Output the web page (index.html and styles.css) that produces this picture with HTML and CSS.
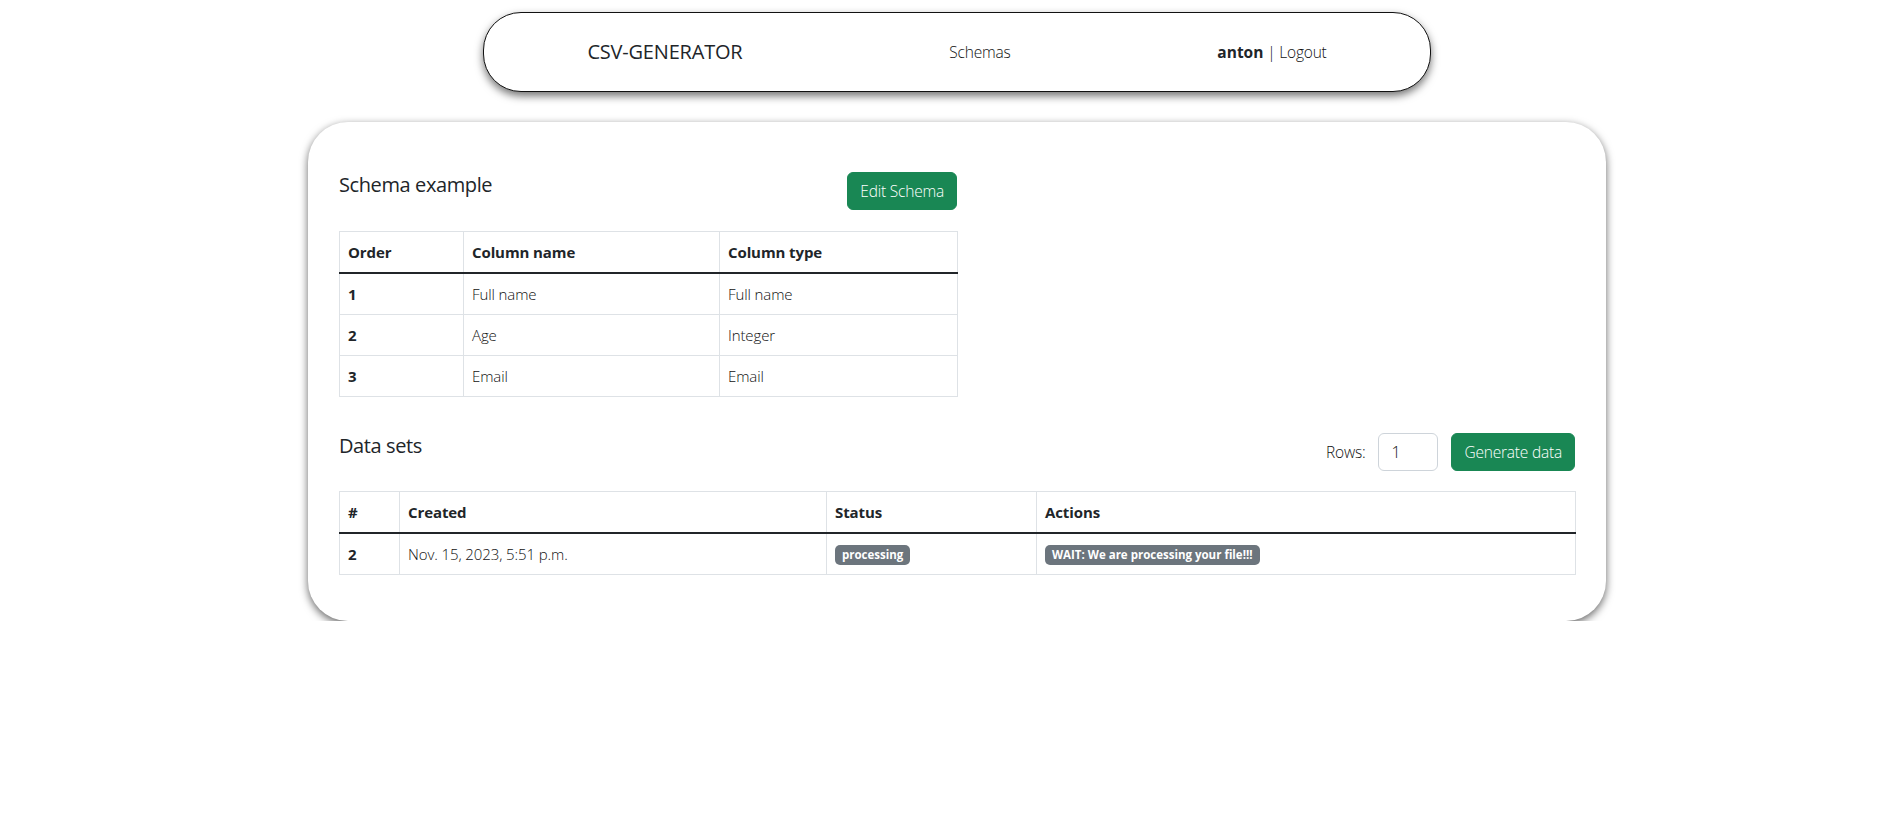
FILE: index.html
```html
<!DOCTYPE html>
<html lang="en">
<head>
<meta charset="utf-8">
<title>CSV-GENERATOR</title>
<link rel="stylesheet" href="styles.css">
</head>
<body>
<div class="page">
  <nav class="navbar">
    <a class="brand" href="#">CSV-GENERATOR</a>
    <a class="nav-link" href="#">Schemas</a>
    <div class="user"><b>anton</b> | <a class="nav-link" href="#">Logout</a></div>
  </nav>

  <main class="card">
    <section class="schema">
      <div class="section-head">
        <h5 class="title">Schema example</h5>
        <a class="btn btn-success" href="#">Edit Schema</a>
      </div>
      <table class="table">
        <colgroup>
          <col class="c-order"><col class="c-name"><col class="c-type">
        </colgroup>
        <thead>
          <tr><th>Order</th><th>Column name</th><th>Column type</th></tr>
        </thead>
        <tbody>
          <tr><th>1</th><td>Full name</td><td>Full name</td></tr>
          <tr><th>2</th><td>Age</td><td>Integer</td></tr>
          <tr><th>3</th><td>Email</td><td>Email</td></tr>
        </tbody>
      </table>
    </section>

    <section class="datasets">
      <div class="section-head">
        <h5 class="title">Data sets</h5>
        <form class="gen-form">
          <label class="rows-label" for="rows">Rows:</label>
          <input class="rows-input" id="rows" type="text" value="1">
          <button class="btn btn-success" type="button">Generate data</button>
        </form>
      </div>
      <table class="table">
        <colgroup>
          <col class="c-num"><col class="c-created"><col class="c-status"><col class="c-actions">
        </colgroup>
        <thead>
          <tr><th>#</th><th>Created</th><th>Status</th><th>Actions</th></tr>
        </thead>
        <tbody>
          <tr>
            <th>2</th>
            <td>Nov. 15, 2023, 5:51 p.m.</td>
            <td><span class="badge">processing</span></td>
            <td><span class="badge">WAIT: We are processing your file!!!</span></td>
          </tr>
        </tbody>
      </table>
    </section>
  </main>
</div>
</body>
</html>
```

FILE: styles.css
```css
* { box-sizing: border-box; }

html, body {
  margin: 0;
  padding: 0;
  background: #fff;
}

body {
  font-family: "Open Sans", "Noto Sans", "Liberation Sans", sans-serif;
  font-size: 16px;
  line-height: 24px;
  color: #212529;
}

a { color: inherit; text-decoration: none; }

.page {
  padding: 12px 0 0 22px;
}

/* ---------- navbar ---------- */
.navbar {
  width: 948px;
  height: 80px;
  margin: 0 auto;
  display: flex;
  align-items: center;
  justify-content: space-around;
  border: 1px solid #111;
  border-radius: 38px;
  background: #fff;
  box-shadow: 0 4px 9px rgba(0, 0, 0, 0.55);
}

.brand {
  font-size: 20px;
  line-height: 30px;
  color: #212529;
  letter-spacing: -0.2px;
}

.nav-link {
  color: #111;
  font-size: 15.5px;
  font-weight: 300;
  letter-spacing: -0.2px;
}

.user {
  font-size: 15.5px;
  font-weight: 300;
  letter-spacing: -0.2px;
  color: #111;
}

.user b { font-weight: 700; letter-spacing: 0; color: #212529; }

/* ---------- card ---------- */
.card {
  width: 1298px;
  margin: 30px auto 0;
  padding: 50px 31px 46px;
  background: #fff;
  border-radius: 40px;
  box-shadow: 0 3px 9px rgba(0, 0, 0, 0.6);
}

.schema {
  width: 618px;
  margin-bottom: 36px;
}

.section-head {
  display: flex;
  justify-content: space-between;
  align-items: flex-start;
  margin-bottom: 21px;
}

.datasets .section-head { margin-bottom: 20px; }

.title {
  margin: 0;
  padding-top: 1px;
  font-size: 20px;
  font-weight: 400;
  line-height: 24px;
  letter-spacing: -0.4px;
}

.btn {
  display: inline-block;
  height: 38px;
  padding: 6px 12px;
  font-family: inherit;
  font-size: 15.5px;
  line-height: 24px;
  font-weight: 300;
  letter-spacing: -0.2px;
  border: 1px solid transparent;
  border-radius: 6px;
  cursor: pointer;
}

.btn-success {
  color: #fff;
  background: #198754;
  border-color: #198754;
}

.gen-form {
  display: flex;
  align-items: center;
  gap: 13px;
  margin: 0;
}

.rows-label {
  font-size: 15.5px;
  font-weight: 300;
  letter-spacing: -0.2px;
  color: #111;
}

.rows-input {
  width: 60px;
  height: 38px;
  padding: 6px 12px;
  font-family: inherit;
  font-size: 16px;
  font-weight: 300;
  line-height: 24px;
  color: #111;
  border: 1px solid #ced4da;
  border-radius: 6px;
  background: #fff;
}

/* ---------- tables ---------- */
.table {
  width: 100%;
  border-collapse: collapse;
  table-layout: fixed;
  border: 1px solid #dee2e6;
  margin: 0;
}

.table th,
.table td {
  padding: 8px;
  text-align: left;
  vertical-align: middle;
  border-left: 1px solid #dee2e6;
  border-right: 1px solid #dee2e6;
  border-bottom: 1px solid #dee2e6;
  font-size: 15px;
  letter-spacing: -0.1px;
  line-height: 24px;
  white-space: nowrap;
}

.table td { font-weight: 300; color: #111; }

.table th { font-weight: 700; }

.table thead th { border-bottom: 2px solid #212529; }

.c-order { width: 124px; }
.c-name { width: 256px; }
.c-type { width: 238px; }

.c-num { width: 60px; }
.c-created { width: 427px; }
.c-status { width: 210px; }
.c-actions { width: 539px; }

.badge {
  display: inline-block;
  padding: 4px 7px;
  font-size: 11.5px;
  font-weight: 700;
  line-height: 12px;
  letter-spacing: 0;
  color: #fff;
  background: #6c757d;
  border-radius: 5px;
  vertical-align: 1px;
}
```
